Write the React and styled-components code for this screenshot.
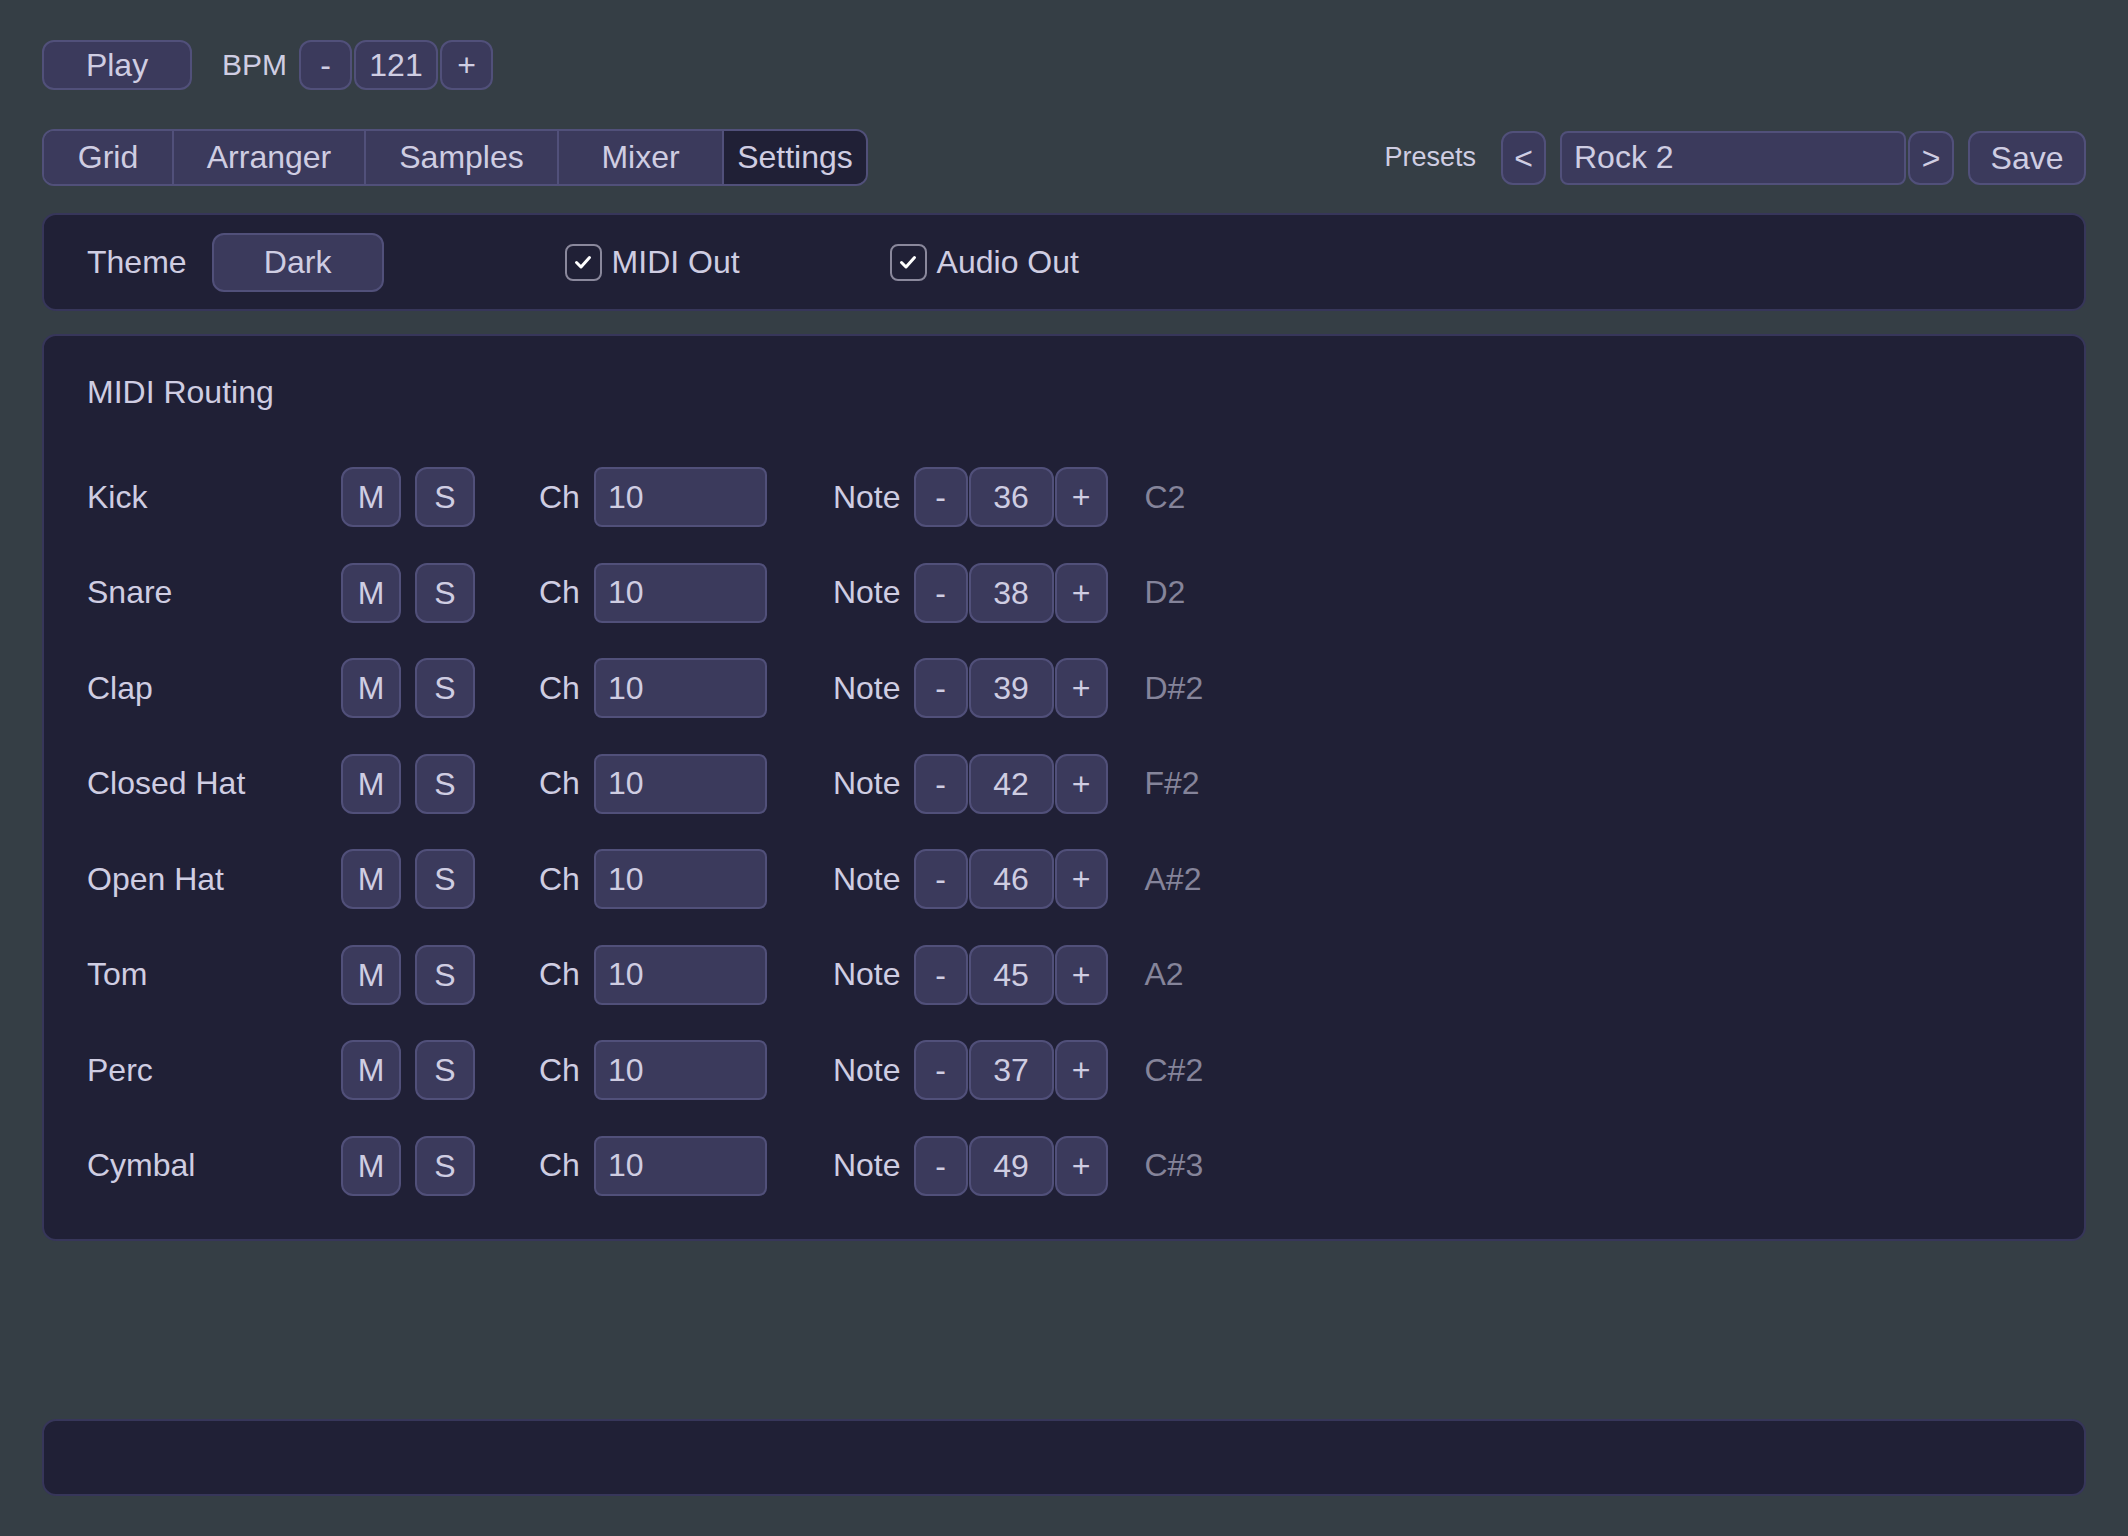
import styled, { createGlobalStyle } from 'styled-components';

const GlobalStyle = createGlobalStyle`
    * { box-sizing: border-box; }
    body {
        margin: 0;
        background: #353e45;
        color: #cfcde2;
        font-family: "Liberation Sans", Arial, sans-serif;
        font-size: 32px;
    }
`;

const Page = styled.div`
    height: 100vh;
    padding: 40px 42px 40px;
    display: flex;
    flex-direction: column;
`;

const TopBar = styled.div`
    display: flex;
    align-items: center;
    height: 50px;
`;

const Button = styled.button`
    width: ${p => p.$w}px;
    height: ${p => p.$h || 50}px;
    padding: 0;
    background: #3b3a5c;
    border: 2px solid #51507a;
    border-radius: 12px;
    color: #cfcde2;
    font-family: inherit;
    font-size: 32px;
    line-height: 1;
    display: flex;
    align-items: center;
    justify-content: center;
    flex-shrink: 0;
`;

const Label = styled.span`
    font-size: ${p => p.$size || 32}px;
    margin-right: ${p => p.$gap || 0}px;
    white-space: nowrap;
`;

const Stepper = styled.div`
    display: flex;
    gap: ${p => p.$gap || 1}px;
`;

const TabRow = styled.div`
    margin-top: 39px;
    display: flex;
    align-items: center;
    justify-content: space-between;
`;

const Tabs = styled.div`
    display: flex;
    height: 57px;
    border: 2px solid #51507a;
    border-radius: 12px;
    overflow: hidden;
`;

const Tab = styled.div`
    width: ${p => p.$w}px;
    display: flex;
    align-items: center;
    justify-content: center;
    background: ${p => (p.$active ? '#202036' : '#3b3a5c')};
    border-left: ${p => (p.$first ? 'none' : '2px solid #51507a')};
    font-size: 32px;
`;

const Presets = styled.div`
    display: flex;
    align-items: center;
`;

const TextBox = styled.div`
    width: ${p => p.$w}px;
    height: ${p => p.$h}px;
    background: #3b3a5c;
    border: 2px solid #51507a;
    border-radius: ${p => p.$r || 8}px;
    padding-left: 12px;
    display: flex;
    align-items: center;
    font-size: 32px;
    flex-shrink: 0;
`;

const Panel = styled.div`
    background: #202036;
    border: 2px solid #37365a;
    border-radius: 14px;
`;

const ThemePanel = styled(Panel)`
    margin-top: 27px;
    height: 98px;
    padding: 0 43px;
    display: flex;
    align-items: center;
`;

const Check = styled.label`
    display: flex;
    align-items: center;
    gap: 10px;
    margin-left: ${p => p.$ml}px;
    font-size: 32px;
`;

const Box = styled.span`
    width: 37px;
    height: 37px;
    border: 2.5px solid #8a889c;
    border-radius: 8px;
    display: flex;
    align-items: center;
    justify-content: center;
`;

const RoutingPanel = styled(Panel)`
    margin-top: 23px;
    padding: 38px 43px 43px;
`;

const Title = styled.div`
    font-size: 32px;
    line-height: 37px;
`;

const Rows = styled.div`
    margin-top: 56px;
    display: flex;
    flex-direction: column;
    gap: 35.5px;
`;

const Row = styled.div`
    display: flex;
    align-items: center;
    height: 60px;
`;

const Name = styled.div`
    width: 254px;
    font-size: 32px;
`;

const Group = styled.div`
    display: flex;
    align-items: center;
    gap: ${p => p.$gap}px;
    margin-left: ${p => p.$ml || 0}px;
`;

const NoteName = styled.span`
    margin-left: 37px;
    color: #85849a;
    font-size: 32px;
`;

const Spacer = styled.div`
    flex: 1;
`;

const BottomBar = styled(Panel)`
    height: 77px;
`;

const tabs = [
    { name: 'Grid', w: 128 },
    { name: 'Arranger', w: 192 },
    { name: 'Samples', w: 193 },
    { name: 'Mixer', w: 165 },
    { name: 'Settings', w: 144 },
];

const drums = [
    { name: 'Kick', note: 36, label: 'C2' },
    { name: 'Snare', note: 38, label: 'D2' },
    { name: 'Clap', note: 39, label: 'D#2' },
    { name: 'Closed Hat', note: 42, label: 'F#2' },
    { name: 'Open Hat', note: 46, label: 'A#2' },
    { name: 'Tom', note: 45, label: 'A2' },
    { name: 'Perc', note: 37, label: 'C#2' },
    { name: 'Cymbal', note: 49, label: 'C#3' },
];

function CheckMark() {
    return (
        <svg width="22" height="22" viewBox="0 0 22 22">
            <path d="M4.5 11.5 L9 16 L17.5 6.5" fill="none" stroke="#fff" strokeWidth="3" strokeLinecap="round" strokeLinejoin="round" />
        </svg>
    );
}

export default function App() {
    return (
        <>
            <GlobalStyle />
            <Page>
                <TopBar>
                    <Button $w={150}>Play</Button>
                    <Label $size={30} style={{ marginLeft: 30 }} $gap={12}>BPM</Label>
                    <Stepper $gap={2}>
                        <Button $w={53}>-</Button>
                        <Button $w={84}>121</Button>
                        <Button $w={53}>+</Button>
                    </Stepper>
                </TopBar>

                <TabRow>
                    <Tabs>
                        {tabs.map((t, i) => (
                            <Tab key={t.name} $w={t.w} $first={i === 0} $active={t.name === 'Settings'}>
                                {t.name}
                            </Tab>
                        ))}
                    </Tabs>
                    <Presets>
                        <Label $size={27} $gap={25}>Presets</Label>
                        <Button $w={45} $h={54}>&lt;</Button>
                        <TextBox $w={346} $h={54} style={{ marginLeft: 14 }}>Rock 2</TextBox>
                        <Button $w={46} $h={54} style={{ marginLeft: 2 }}>&gt;</Button>
                        <Button $w={118} $h={54} style={{ marginLeft: 14 }}>Save</Button>
                    </Presets>
                </TabRow>

                <ThemePanel>
                    <Label $gap={25}>Theme</Label>
                    <Button $w={172} $h={59}>Dark</Button>
                    <Check $ml={181}>
                        <Box><CheckMark /></Box>
                        MIDI Out
                    </Check>
                    <Check $ml={150}>
                        <Box><CheckMark /></Box>
                        Audio Out
                    </Check>
                </ThemePanel>

                <RoutingPanel>
                    <Title>MIDI Routing</Title>
                    <Rows>
                        {drums.map(d => (
                            <Row key={d.name}>
                                <Name>{d.name}</Name>
                                <Group $gap={14}>
                                    <Button $w={60} $h={60}>M</Button>
                                    <Button $w={60} $h={60}>S</Button>
                                </Group>
                                <Group $gap={14} $ml={64}>
                                    <Label>Ch</Label>
                                    <TextBox $w={173} $h={60}>10</TextBox>
                                </Group>
                                <Group $gap={13} $ml={66}>
                                    <Label>Note</Label>
                                    <Stepper>
                                        <Button $w={54} $h={60}>-</Button>
                                        <Button $w={85} $h={60}>{d.note}</Button>
                                        <Button $w={53} $h={60}>+</Button>
                                    </Stepper>
                                </Group>
                                <NoteName>{d.label}</NoteName>
                            </Row>
                        ))}
                    </Rows>
                </RoutingPanel>

                <Spacer />
                <BottomBar />
            </Page>
        </>
    );
}
